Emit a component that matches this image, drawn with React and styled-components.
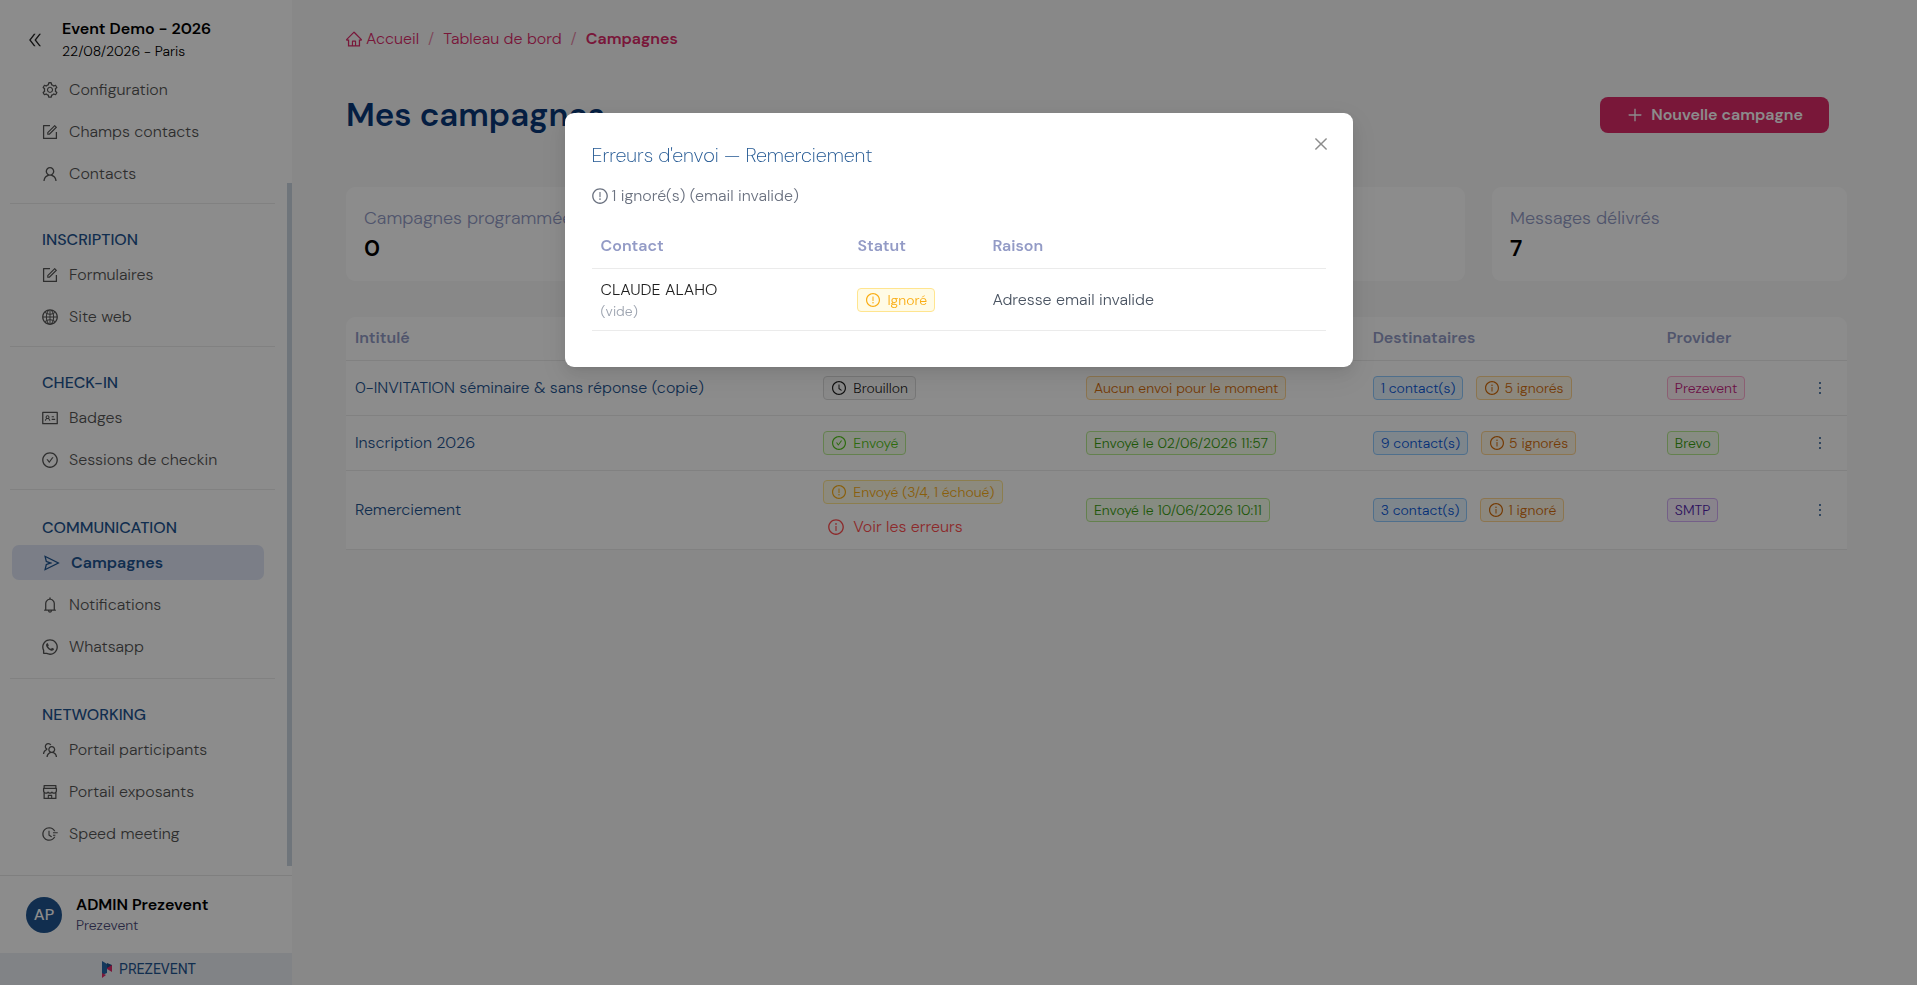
import React, { useState } from "react";
import styled, { createGlobalStyle, css } from "styled-components";
import {
  AiOutlineBell,
  AiOutlineCheckCircle,
  AiOutlineClockCircle,
  AiOutlineClose,
  AiOutlineDoubleLeft,
  AiOutlineExclamationCircle,
  AiOutlineFieldTime,
  AiOutlineForm,
  AiOutlineGlobal,
  AiOutlineHome,
  AiOutlineIdcard,
  AiOutlineInfoCircle,
  AiOutlineMore,
  AiOutlinePlus,
  AiOutlineSend,
  AiOutlineSetting,
  AiOutlineShop,
  AiOutlineTeam,
  AiOutlineUser,
  AiOutlineWhatsApp,
} from "react-icons/ai";

const sections = [
  {
    items: [
      { label: "Configuration", icon: AiOutlineSetting },
      { label: "Champs contacts", icon: AiOutlineForm },
      { label: "Contacts", icon: AiOutlineUser },
    ],
  },
  {
    title: "INSCRIPTION",
    items: [
      { label: "Formulaires", icon: AiOutlineForm },
      { label: "Site web", icon: AiOutlineGlobal },
    ],
  },
  {
    title: "CHECK-IN",
    items: [
      { label: "Badges", icon: AiOutlineIdcard },
      { label: "Sessions de checkin", icon: AiOutlineCheckCircle },
    ],
  },
  {
    title: "COMMUNICATION",
    current: true,
    items: [
      { label: "Campagnes", icon: AiOutlineSend, active: true },
      { label: "Notifications", icon: AiOutlineBell },
      { label: "Whatsapp", icon: AiOutlineWhatsApp },
    ],
  },
  {
    title: "NETWORKING",
    items: [
      { label: "Portail participants", icon: AiOutlineTeam },
      { label: "Portail exposants", icon: AiOutlineShop },
      { label: "Speed meeting", icon: AiOutlineFieldTime },
    ],
  },
];

const stats = [
  { label: "Campagnes programmées", value: 0 },
  { label: "Campagnes envoyées", value: 2 },
  { label: "Brouillons", value: 1 },
  { label: "Messages délivrés", value: 7 },
];

const campaigns = [
  {
    name: "0-INVITATION séminaire & sans réponse (copie)",
    status: { label: "Brouillon", tone: "neutral", icon: AiOutlineClockCircle },
    sending: { label: "Aucun envoi pour le moment", tone: "orange" },
    contacts: "1 contact(s)",
    ignored: "5 ignorés",
    provider: { label: "Prezevent", tone: "magenta" },
  },
  {
    name: "Inscription 2026",
    status: { label: "Envoyé", tone: "success", icon: AiOutlineCheckCircle },
    sending: { label: "Envoyé le 02/06/2026 11:57", tone: "green" },
    contacts: "9 contact(s)",
    ignored: "5 ignorés",
    provider: { label: "Brevo", tone: "green" },
  },
  {
    name: "Remerciement",
    status: {
      label: "Envoyé (3/4, 1 échoué)",
      tone: "warning",
      icon: AiOutlineExclamationCircle,
    },
    hasErrors: true,
    sending: { label: "Envoyé le 10/06/2026 10:11", tone: "green" },
    contacts: "3 contact(s)",
    ignored: "1 ignoré",
    provider: { label: "SMTP", tone: "purple" },
  },
];

const tones = {
  neutral: ["rgba(0, 0, 0, 0.88)", "#fafafa", "#d9d9d9"],
  success: ["#52c41a", "#f6ffed", "#b7eb8f"],
  green: ["#389e0d", "#f6ffed", "#b7eb8f"],
  warning: ["#faad14", "#fffbe6", "#ffe58f"],
  orange: ["#d46b08", "#fff7e6", "#ffd591"],
  blue: ["#0958d9", "#e6f4ff", "#91caff"],
  magenta: ["#c41d7f", "#fff0f6", "#ffadd2"],
  purple: ["#531dab", "#f9f0ff", "#d3adf7"],
};

const Sidebar = () => (
  <Aside>
    <EventHeader>
      <IconButton type="button" aria-label="Réduire le menu">
        <AiOutlineDoubleLeft />
      </IconButton>
      <div>
        <EventName>Event Demo - 2026</EventName>
        <EventDate>22/08/2026 - Paris</EventDate>
      </div>
    </EventHeader>
    <NavArea>
      <Nav>
        {sections.map((section, i) => (
          <Section key={i} $titled={!!section.title} $current={section.current}>
            {section.title ? <SectionTitle>{section.title}</SectionTitle> : null}
            <NavList>
              {section.items.map(({ label, icon: Icon, active }) => (
                <li key={label}>
                  <NavLink href="#" $active={active}>
                    <Icon />
                    {label}
                  </NavLink>
                </li>
              ))}
            </NavList>
          </Section>
        ))}
      </Nav>
      <Rail>
        <Thumb />
      </Rail>
    </NavArea>
    <UserBlock>
      <Avatar>AP</Avatar>
      <div>
        <UserName>ADMIN Prezevent</UserName>
        <UserOrg>Prezevent</UserOrg>
      </div>
    </UserBlock>
    <Brand>
      <svg width="11" height="17" viewBox="0 0 11 17" aria-hidden="true">
        <path d="M0 0L5 3V12L0 14Z" fill="#2566a8" />
        <path d="M5 2L10 4V6L5 8Z" fill="#1c4f87" />
        <path d="M5 7L10 4V11L5 8Z" fill="#dc2a69" />
        <path d="M0 12L4 14L0 17Z" fill="#dc2a69" />
      </svg>
      PREZEVENT
    </Brand>
  </Aside>
);

const StatusTag = ({ label, tone, icon: Icon }) => (
  <Tag $tone={tone}>
    {Icon ? <Icon /> : null}
    {label}
  </Tag>
);

const CampaignTable = ({ onShowErrors }) => (
  <Table>
    <colgroup>
      <Col $width="31.2%" />
      <Col $width="17.5%" />
      <Col $width="19.1%" />
      <Col $width="19.6%" />
      <Col $width="9%" />
      <Col />
    </colgroup>
    <thead>
      <tr>
        <Th>Intitulé</Th>
        <Th>Statut</Th>
        <Th>Envoi</Th>
        <Th>Destinataires</Th>
        <Th>Provider</Th>
        <Th aria-label="Actions" />
      </tr>
    </thead>
    <tbody>
      {campaigns.map((c) => (
        <tr key={c.name}>
          <Td>
            <CampaignLink href="#">{c.name}</CampaignLink>
          </Td>
          <Td>
            <StatusTag {...c.status} />
            {c.hasErrors ? (
              <ErrorButton type="button" onClick={onShowErrors}>
                <AiOutlineInfoCircle />
                Voir les erreurs
              </ErrorButton>
            ) : null}
          </Td>
          <Td>
            <StatusTag {...c.sending} />
          </Td>
          <Td>
            <TagRow>
              <Tag $tone="blue">{c.contacts}</Tag>
              <Tag $tone="orange" $tight>
                <AiOutlineInfoCircle />
                {c.ignored}
              </Tag>
            </TagRow>
          </Td>
          <Td>
            <StatusTag {...c.provider} />
          </Td>
          <Td>
            <MoreButton type="button" aria-label="Actions">
              <AiOutlineMore />
            </MoreButton>
          </Td>
        </tr>
      ))}
    </tbody>
  </Table>
);

const ErrorsModal = ({ onClose }) => (
  <Mask>
    <Dialog role="dialog" aria-modal="true" aria-labelledby="errors-title">
      <CloseButton type="button" aria-label="Fermer" onClick={onClose}>
        <AiOutlineClose />
      </CloseButton>
      <DialogTitle id="errors-title">Erreurs d'envoi — Remerciement</DialogTitle>
      <Summary>
        <AiOutlineExclamationCircle />1 ignoré(s) (email invalide)
      </Summary>
      <Table>
        <colgroup>
          <Col $width="35%" />
          <Col $width="18.4%" />
          <Col />
        </colgroup>
        <thead>
          <tr>
            <Th>Contact</Th>
            <Th>Statut</Th>
            <Th>Raison</Th>
          </tr>
        </thead>
        <tbody>
          <tr>
            <Td>
              <ContactName>CLAUDE ALAHO</ContactName>
              <ContactEmail>(vide)</ContactEmail>
            </Td>
            <Td>
              <StatusTag
                label="Ignoré"
                tone="warning"
                icon={AiOutlineExclamationCircle}
              />
            </Td>
            <Td>Adresse email invalide</Td>
          </tr>
        </tbody>
      </Table>
    </Dialog>
  </Mask>
);

const App = () => {
  const [showErrors, setShowErrors] = useState(true);

  return (
    <>
      <GlobalStyle />
      <Layout>
        <Sidebar />
        <Main>
          <Breadcrumb aria-label="Fil d'Ariane">
            <a href="#">
              <AiOutlineHome />
              Accueil
            </a>
            <span>/</span>
            <a href="#">Tableau de bord</a>
            <span>/</span>
            <strong>Campagnes</strong>
          </Breadcrumb>
          <PageHeader>
            <PageTitle>Mes campagnes</PageTitle>
            <PrimaryButton type="button">
              <AiOutlinePlus />
              Nouvelle campagne
            </PrimaryButton>
          </PageHeader>
          <Stats>
            {stats.map((s) => (
              <StatCard key={s.label}>
                <StatLabel>{s.label}</StatLabel>
                <StatValue>{s.value}</StatValue>
              </StatCard>
            ))}
          </Stats>
          <CampaignTable onShowErrors={() => setShowErrors(true)} />
        </Main>
      </Layout>
      {showErrors ? <ErrorsModal onClose={() => setShowErrors(false)} /> : null}
    </>
  );
};

export default App;

const GlobalStyle = createGlobalStyle`
* {
  box-sizing: border-box;
}
body {
  margin: 0;
  background: #f7f7f7;
  color: #000;
  font-family: "DM Sans", Inter, "Liberation Sans", sans-serif;
  font-size: 16px;
  font-weight: 300;
  line-height: 24px;
}
button {
  font: inherit;
  border: 0;
  padding: 0;
  background: none;
  cursor: pointer;
}
a {
  color: inherit;
  text-decoration: none;
}
svg {
  flex: none;
}
`;

const Layout = styled.div`
  display: flex;
  height: 100vh;
`;

const Aside = styled.aside`
  display: flex;
  flex-direction: column;
  flex: none;
  width: 292px;
  background: #fff;
`;

const EventHeader = styled.div`
  display: flex;
  align-items: center;
  gap: 18px;
  flex: none;
  height: 72px;
  padding: 7px 26px 0;
`;

const IconButton = styled.button`
  display: flex;
  color: #222;
  font-size: 18px;
`;

const EventName = styled.div`
  line-height: 23px;
  font-weight: 600;
`;

const EventDate = styled.div`
  line-height: 23px;
  font-size: 14px;
`;

const NavArea = styled.div`
  display: flex;
  flex: 1;
  min-height: 0;
`;

const Nav = styled.nav`
  flex: 1;
  overflow: hidden;
`;

const Rail = styled.div`
  display: flex;
  flex-direction: column;
  justify-content: flex-end;
  width: 5px;
  padding-bottom: 9px;
`;

const Thumb = styled.div`
  height: 86%;
  background: #cbd5e1;
`;

const Section = styled.section`
  margin: 0 12px 0 10px;
  padding-bottom: ${(p) => (p.$current ? 14 : 12)}px;
  ${(p) =>
    p.$titled &&
    css`
      border-top: 1px solid #ebebeb;
      padding-top: ${p.$current ? 26 : 24}px;
    `}
`;

const SectionTitle = styled.h2`
  margin: 0 0 5px;
  padding-left: 32px;
  color: #1f5591;
  font-size: 16px;
  font-weight: 500;
`;

const NavList = styled.ul`
  display: flex;
  flex-direction: column;
  gap: 7px;
  margin: 0;
  padding: 0 11px 0 2px;
  list-style: none;
`;

const NavLink = styled.a`
  display: flex;
  align-items: center;
  gap: 10px;
  height: 35px;
  padding-left: 29px;
  border-radius: 7px;
  color: #555;
  svg {
    font-size: 18px;
  }
  ${(p) =>
    p.$active &&
    css`
      padding-left: 31px;
      background: #e0e6f6;
      color: #1f5591;
      font-weight: 600;
    `}
`;

const UserBlock = styled.div`
  display: flex;
  align-items: center;
  gap: 14px;
  flex: none;
  height: 78px;
  padding: 0 26px;
  border-top: 1px solid #e8e8e8;
`;

const Avatar = styled.span`
  display: flex;
  align-items: center;
  justify-content: center;
  width: 36px;
  height: 36px;
  border-radius: 50%;
  background: #1f5591;
  color: #fff;
  font-weight: 500;
`;

const UserName = styled.div`
  line-height: 20px;
  font-weight: 600;
`;

const UserOrg = styled.div`
  line-height: 20px;
  color: #4a4a78;
  font-size: 14px;
`;

const Brand = styled.div`
  display: flex;
  align-items: center;
  justify-content: center;
  gap: 6px;
  flex: none;
  height: 32px;
  padding-left: 6px;
  background: #ebeff4;
  color: #1f5591;
  font-family: Roboto, sans-serif;
  font-size: 14px;
  font-weight: 400;
`;

const Main = styled.main`
  flex: 1;
  min-width: 0;
  padding: 27px 70px 0 54px;
`;

const Breadcrumb = styled.nav`
  display: flex;
  gap: 9px;
  color: #dc2a69;
  a {
    display: flex;
    align-items: center;
    gap: 3px;
  }
  svg {
    margin-left: -1px;
    font-size: 18px;
  }
  span {
    opacity: 0.6;
  }
  strong {
    font-weight: 600;
  }
`;

const PageHeader = styled.div`
  display: flex;
  align-items: center;
  justify-content: space-between;
  margin: 40px 0 48px;
  padding-right: 18px;
`;

const PageTitle = styled.h1`
  margin: 0;
  color: #093878;
  font-size: 33px;
  line-height: 48px;
  font-weight: 600;
`;

const PrimaryButton = styled.button`
  display: flex;
  align-items: center;
  gap: 7px;
  height: 36px;
  padding: 0 26px;
  border-radius: 8px;
  background: #dc2a69;
  color: #fff;
  font-weight: 600;
  svg {
    font-size: 18px;
  }
`;

const Stats = styled.div`
  display: grid;
  grid-template-columns: repeat(4, 1fr);
  gap: 27px;
  margin-bottom: 36px;
`;

const StatCard = styled.div`
  height: 94px;
  padding: 18px;
  border-radius: 9px;
  background: #fff;
`;

const StatLabel = styled.div`
  line-height: 27px;
  color: #939bc6;
  font-size: 18px;
`;

const StatValue = styled.div`
  line-height: 32px;
  font-size: 23px;
  font-weight: 600;
`;

const Table = styled.table`
  width: 100%;
  table-layout: fixed;
  border-collapse: separate;
  border-spacing: 0;
  border-radius: 9px 9px 0 0;
  background: #fff;
`;

const Col = styled.col`
  width: ${(p) => p.$width || "auto"};
`;

const Th = styled.th`
  height: 44px;
  padding: 0 9px 2px;
  border-bottom: 1px solid #ebebeb;
  color: #939bc6;
  font-weight: 600;
  text-align: left;
`;

const Td = styled.td`
  height: 55px;
  padding: 9px;
  border-bottom: 1px solid #ebebeb;
  color: #4b5563;
  line-height: 24px;
`;

const CampaignLink = styled.a`
  color: #1f5591;
`;

const Tag = styled.span`
  display: flex;
  align-items: center;
  gap: ${(p) => (p.$tight ? 4 : 6)}px;
  width: fit-content;
  height: 24px;
  padding: 0 7px;
  border: 1px solid ${(p) => tones[p.$tone][2]};
  border-radius: 4px;
  background: ${(p) => tones[p.$tone][1]};
  color: ${(p) => tones[p.$tone][0]};
  font-size: 14px;
  white-space: nowrap;
  svg {
    font-size: 16px;
  }
`;

const TagRow = styled.div`
  display: flex;
  gap: 13px;
`;

const ErrorButton = styled.button`
  display: flex;
  align-items: center;
  gap: 8px;
  height: 36px;
  margin-top: 5px;
  margin-bottom: -5px;
  padding-left: 4px;
  color: #ff4d4f;
  svg {
    font-size: 18px;
  }
`;

const MoreButton = styled.button`
  display: flex;
  width: 36px;
  justify-content: center;
  color: #1f5591;
  font-size: 18px;
`;

const Mask = styled.div`
  position: fixed;
  inset: 0;
  padding-top: 113px;
  background: rgba(0, 0, 0, 0.45);
`;

const Dialog = styled.div`
  position: relative;
  width: 788px;
  margin: 0 auto;
  padding: 27px 27px 36px;
  border-radius: 9px;
  background: #fff;
  box-shadow: 0 6px 16px 0 rgba(0, 0, 0, 0.08),
    0 3px 6px -4px rgba(0, 0, 0, 0.12), 0 9px 28px 8px rgba(0, 0, 0, 0.05);
`;

const CloseButton = styled.button`
  position: absolute;
  top: 22px;
  right: 23px;
  display: flex;
  color: #8c8c8c;
  font-size: 18px;
`;

const DialogTitle = styled.h2`
  margin: 0 0 14px;
  color: #1f5591;
  font-size: 20px;
  line-height: 30px;
  font-weight: 200;
`;

const Summary = styled.p`
  display: flex;
  align-items: center;
  gap: 3px;
  margin: 0 0 17px;
  color: #6b7280;
  svg {
    margin-left: -1px;
    font-size: 18px;
  }
`;

const ContactName = styled.div`
  line-height: 23px;
  color: rgba(0, 0, 0, 0.88);
`;

const ContactEmail = styled.div`
  line-height: 20px;
  color: #9ca3af;
  font-size: 14px;
`;
